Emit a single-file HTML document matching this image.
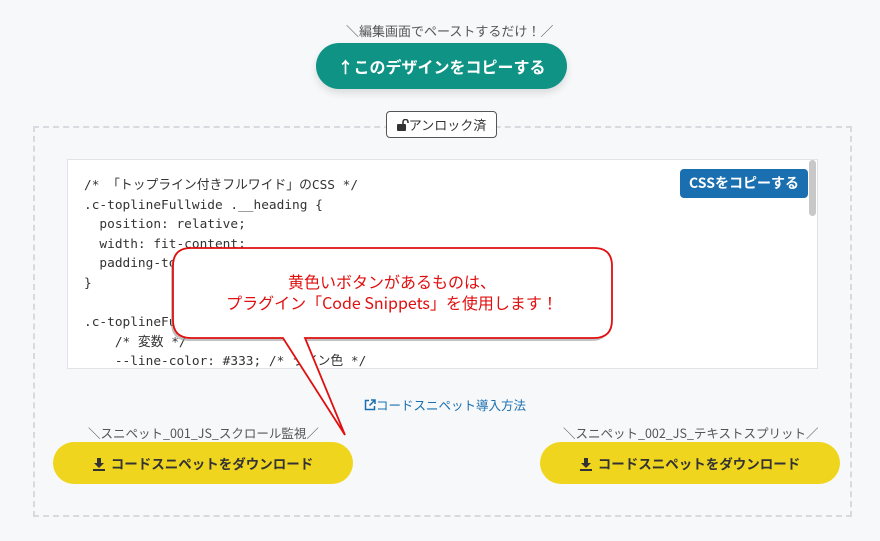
<!DOCTYPE html>
<html><head><meta charset="utf-8"><style>
*{box-sizing:border-box;margin:0;padding:0}
body{width:880px;height:541px;background:#f7f8fa;font-family:"Noto Sans CJK JP",sans-serif;position:relative;overflow:hidden;color:#333}
.abs{position:absolute}
.note{font-size:13px;color:#555;white-space:nowrap}
.btn1{left:316px;top:43px;width:251px;height:46px;border-radius:23px;background:#0e9384;color:#fff;font-weight:bold;font-size:16px;text-align:center;line-height:46px;box-shadow:0 4px 8px rgba(0,0,0,.12)}
.dash{left:33px;top:126px;width:819px;height:391px;border:2px dashed #d8dadf}
.unlock{left:386px;top:111px;width:111px;height:27px;border:1px solid #555;border-radius:4px;background:#fff;font-size:13px;line-height:25px;text-align:center}
.code{left:67px;top:159px;width:751px;height:210px;background:#fff;border:1px solid #e2e3e6;overflow:hidden}
pre{position:absolute;left:16px;top:16px;font-family:"DejaVu Sans Mono","Noto Sans CJK JP",monospace;font-size:12.8px;line-height:19.6px;color:#333}
.css{left:680px;top:169px;width:128px;height:29px;background:#1a6fb0;color:#fff;border-radius:4px;font-size:14px;font-weight:bold;line-height:29px;text-align:center}
.sb{left:809px;top:160px;width:7px;height:56px;background:#c8c8c8;border-radius:4px}
.yb{height:42px;width:300px;border-radius:21px;background:#f0d51e;color:#333;font-weight:bold;font-size:13.5px;line-height:42px;text-align:center;top:442px}
.yb svg{vertical-align:-2px;margin-right:6px}
</style></head><body>
<div class="abs note" style="left:346px;top:21px">＼編集画面でペーストするだけ！／</div>
<div class="abs btn1">↑このデザインをコピーする</div>
<div class="abs dash"></div>
<div class="abs unlock"><svg width="12" height="12" viewBox="0 0 12 12" style="vertical-align:-1px"><rect x="0" y="5" width="9" height="7" rx="1" fill="#333"/><path d="M6 5V3a2.5 2.5 0 0 1 5 0v1" fill="none" stroke="#333" stroke-width="1.6"/></svg>アンロック済</div>
<div class="abs code"><pre>/* 「トップライン付きフルワイド」のCSS */
.c-toplineFullwide .__heading {
  position: relative;
  width: fit-content;
  padding-top: 10px;
}

.c-toplineFullwide {
    /* 変数 */
    --line-color: #333; /* ライン色 */</pre></div>
<div class="abs sb"></div>
<div class="abs css">CSSをコピーする</div>
<svg class="abs" style="left:0;top:0" width="880" height="541">
<path d="M189 251 H592 Q609 251 609 268 V323 Q609 341 592 341 H189 Q171 341 171 323 V268 Q171 251 189 251 Z" fill="#999" opacity=".6"/>
<path d="M191 248 H594 Q612 248 612 266 V320 Q612 338 594 338 H305 L345 435 L283 338 H191 Q173 338 173 320 V266 Q173 248 191 248 Z" fill="#fff" stroke="#e01010" stroke-width="1.8"/>
<text x="392" y="288" fill="#e01010" font-size="16" text-anchor="middle" font-family="Noto Sans CJK JP,sans-serif">黄色いボタンがあるものは、</text>
<text x="392" y="309" fill="#e01010" font-size="16" text-anchor="middle" font-family="Noto Sans CJK JP,sans-serif">プラグイン「Code Snippets」を使用します！</text>
</svg>
<div class="abs" style="left:364px;top:395px;font-size:12.5px;color:#1a6fb0"><svg width="12" height="12" viewBox="0 0 12 12" style="vertical-align:-1px"><path d="M5 1.5H1.5v9h9V7" fill="none" stroke="#1a6fb0" stroke-width="1.5"/><path d="M7 1h4v4M11 1L5.5 6.5" fill="none" stroke="#1a6fb0" stroke-width="1.5"/></svg>コードスニペット導入方法</div>
<div class="abs note" style="left:88px;top:423px;font-size:12.5px">＼スニペット_001_JS_スクロール監視／</div>
<div class="abs note" style="left:563px;top:423px;font-size:12.5px">＼スニペット_002_JS_テキストスプリット／</div>
<div class="abs yb" style="left:53px"><svg width="12" height="13" viewBox="0 0 12 13"><path d="M4 0h4v5h3L6 10 1 5h3z M0 11h12v2H0z" fill="#333"/></svg>コードスニペットをダウンロード</div>
<div class="abs yb" style="left:540px"><svg width="12" height="13" viewBox="0 0 12 13"><path d="M4 0h4v5h3L6 10 1 5h3z M0 11h12v2H0z" fill="#333"/></svg>コードスニペットをダウンロード</div>
</body></html>
